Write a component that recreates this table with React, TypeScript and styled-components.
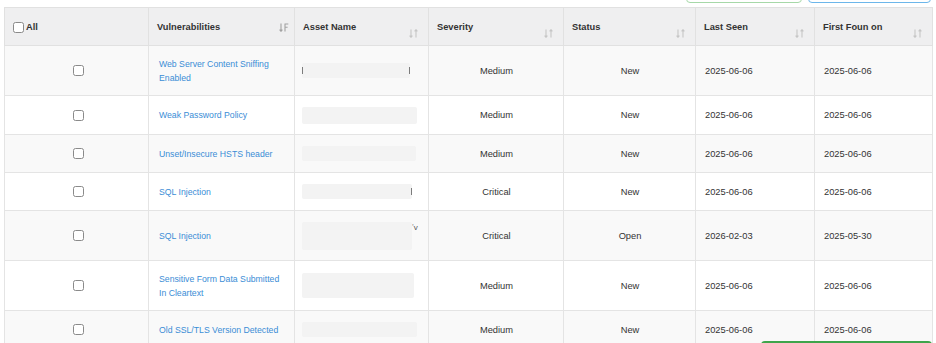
import React from 'react';
import styled, { createGlobalStyle } from 'styled-components';

interface Finding {
  name: string;
  asset: { width: number; height: number; left?: boolean; right?: boolean; tail?: string };
  severity: string;
  status: string;
  lastSeen: string;
  firstFound: string;
}

const findings: Finding[] = [
  { name: 'Web Server Content Sniffing Enabled', asset: { width: 108, height: 15, left: true, right: true }, severity: 'Medium', status: 'New', lastSeen: '2025-06-06', firstFound: '2025-06-06' },
  { name: 'Weak Password Policy', asset: { width: 115, height: 17 }, severity: 'Medium', status: 'New', lastSeen: '2025-06-06', firstFound: '2025-06-06' },
  { name: 'Unset/Insecure HSTS header', asset: { width: 114, height: 15 }, severity: 'Medium', status: 'New', lastSeen: '2025-06-06', firstFound: '2025-06-06' },
  { name: 'SQL Injection', asset: { width: 110, height: 15, right: true }, severity: 'Critical', status: 'New', lastSeen: '2025-06-06', firstFound: '2025-06-06' },
  { name: 'SQL Injection', asset: { width: 110, height: 28, tail: 'ʼv' }, severity: 'Critical', status: 'Open', lastSeen: '2026-02-03', firstFound: '2025-05-30' },
  { name: 'Sensitive Form Data Submitted In Cleartext', asset: { width: 112, height: 25 }, severity: 'Medium', status: 'New', lastSeen: '2025-06-06', firstFound: '2025-06-06' },
  { name: 'Old SSL/TLS Version Detected', asset: { width: 115, height: 15 }, severity: 'Medium', status: 'New', lastSeen: '2025-06-06', firstFound: '2025-06-06' },
];

const columns = [144, 146, 134, 135, 132, 119, 118];

const GlobalStyle = createGlobalStyle`
  html, body { margin: 0; padding: 0; background: #fff; }
  body {
    font-family: "Liberation Sans", Arial, Helvetica, sans-serif;
    color: #333;
    overflow: hidden;
  }
`;

const Page = styled.div`
  padding: 0 4px;
`;

const Toolbar = styled.div`
  height: 3px;
  overflow: hidden;
  display: flex;
  justify-content: flex-end;
  align-items: flex-end;
  gap: 6px;
  padding-right: 1px;
`;

const OutlineButton = styled.div<{ $color: string; $width: number }>`
  flex: none;
  width: ${p => p.$width}px;
  height: 30px;
  box-sizing: border-box;
  border: 1.5px solid ${p => p.$color};
  border-radius: 4px;
  background: #fff;
`;

const Table = styled.table`
  margin-top: 4px;
  width: 928px;
  border-collapse: collapse;
  table-layout: fixed;
`;

const HeadCell = styled.th`
  height: 37px;
  padding: 0 0 0 8px;
  background: #efeff0;
  border: 1px solid #e1e1e1;
  font-size: 9.3px;
  font-weight: bold;
  color: #333;
  text-align: left;
  vertical-align: middle;
`;

const HeadInner = styled.div`
  display: flex;
  align-items: center;
  justify-content: space-between;
  height: 37px;
  padding-top: 1px;
  box-sizing: border-box;
`;

const HeadLabel = styled.span`
  display: flex;
  align-items: center;
  gap: 2px;
  white-space: nowrap;
`;

const SortWrap = styled.span<{ $active?: boolean }>`
  display: flex;
  margin-right: ${p => (p.$active ? 5 : 10)}px;
  margin-top: ${p => (p.$active ? 0 : 12)}px;
`;

const Row = styled.tr`
  &:nth-child(odd) { background: #f9f9f9; }
  &:nth-child(even) { background: #fff; }
`;

const Cell = styled.td<{ $align?: 'left' | 'center'; $padLeft?: number }>`
  border: 1px solid #e4e4e4;
  padding: 10.5px 8px 10.5px ${p => p.$padLeft ?? 9}px;
  font-size: 9.3px;
  line-height: 14px;
  color: #333;
  text-align: ${p => p.$align ?? 'left'};
  vertical-align: middle;
`;

const Box = styled.span`
  display: block;
  flex: none;
  width: 11px;
  height: 11px;
  box-sizing: border-box;
  border: 1px solid #8a8a8a;
  border-radius: 2.5px;
  background: #fff;
`;

const CheckWrap = styled.div`
  display: flex;
  align-items: center;
  justify-content: center;
  height: 16px;
  padding-left: 2px;
`;

const VulnLink = styled.a`
  color: #3a8dd6;
  font-size: 8.7px;
  line-height: 14px;
  text-decoration: none;
  display: block;
`;

const AssetWrap = styled.div`
  display: flex;
  align-items: flex-start;
`;

const Redacted = styled.div<{ $w: number; $h: number }>`
  width: ${p => p.$w}px;
  height: ${p => p.$h}px;
  background: #f3f3f3;
  border-radius: 2px;
  filter: blur(0.6px);
  display: flex;
  align-items: center;
  justify-content: space-between;
`;

const Tick = styled.span<{ $show?: boolean }>`
  width: 1px;
  height: 7px;
  background: ${p => (p.$show ? '#7c7c7c' : 'transparent')};
`;

const Tail = styled.span`
  font-size: 8px;
  line-height: 10px;
  color: #555;
  margin-top: 1px;
`;

const FloatingAction = styled.div`
  position: fixed;
  right: 4px;
  bottom: -29px;
  width: 171px;
  height: 31px;
  box-sizing: border-box;
  border: 2px solid #3ea54b;
  border-radius: 4px;
  background: #fff;
`;

const SortBoth = () => (
  <svg width="9" height="9" viewBox="0 0 9 9" fill="none" stroke="#c6c6c6" strokeWidth="1.1">
    <path d="M2 0.5V8.2M0.6 6.6L2 8.3L3.4 6.6" />
    <path d="M7 8.5V0.8M5.6 2.4L7 0.7L8.4 2.4" />
  </svg>
);

const SortDown = () => (
  <svg width="10" height="9" viewBox="0 0 10 9" fill="none" stroke="#a2a2a2" strokeWidth="1.1">
    <path d="M2 0.5V8.2M0.6 6.6L2 8.3L3.4 6.6" />
    <path d="M5.5 1H9.3M6 1V8.5M6 4.2H8.6" />
  </svg>
);

const headers = ['Vulnerabilities', 'Asset Name', 'Severity', 'Status', 'Last Seen', 'First Foun on'];

export default function App() {
  return (
    <>
      <GlobalStyle />
      <Page>
        <Toolbar>
          <OutlineButton $color="#a6d8a8" $width={116} />
          <OutlineButton $color="#6cb6ea" $width={123} />
        </Toolbar>
        <Table>
          <colgroup>
            {columns.map((w, i) => (
              <col key={i} style={{ width: w }} />
            ))}
          </colgroup>
          <thead>
            <tr>
              <HeadCell>
                <HeadInner>
                  <HeadLabel>
                    <Box />
                    All
                  </HeadLabel>
                </HeadInner>
              </HeadCell>
              {headers.map((h, i) => (
                <HeadCell key={h}>
                  <HeadInner>
                    <HeadLabel>{h}</HeadLabel>
                    <SortWrap $active={i === 0}>{i === 0 ? <SortDown /> : <SortBoth />}</SortWrap>
                  </HeadInner>
                </HeadCell>
              ))}
            </tr>
          </thead>
          <tbody>
            {findings.map((f, i) => (
              <Row key={i}>
                <Cell $align="center">
                  <CheckWrap>
                    <Box />
                  </CheckWrap>
                </Cell>
                <Cell $padLeft={10}>
                  <VulnLink href="#">{f.name}</VulnLink>
                </Cell>
                <Cell $padLeft={7}>
                  <AssetWrap>
                    <Redacted $w={f.asset.width} $h={f.asset.height}>
                      <Tick $show={f.asset.left} />
                      <Tick $show={f.asset.right} />
                    </Redacted>
                    {f.asset.tail && <Tail>{f.asset.tail}</Tail>}
                  </AssetWrap>
                </Cell>
                <Cell $align="center">{f.severity}</Cell>
                <Cell $align="center">{f.status}</Cell>
                <Cell>{f.lastSeen}</Cell>
                <Cell>{f.firstFound}</Cell>
              </Row>
            ))}
          </tbody>
        </Table>
      </Page>
      <FloatingAction />
    </>
  );
}
